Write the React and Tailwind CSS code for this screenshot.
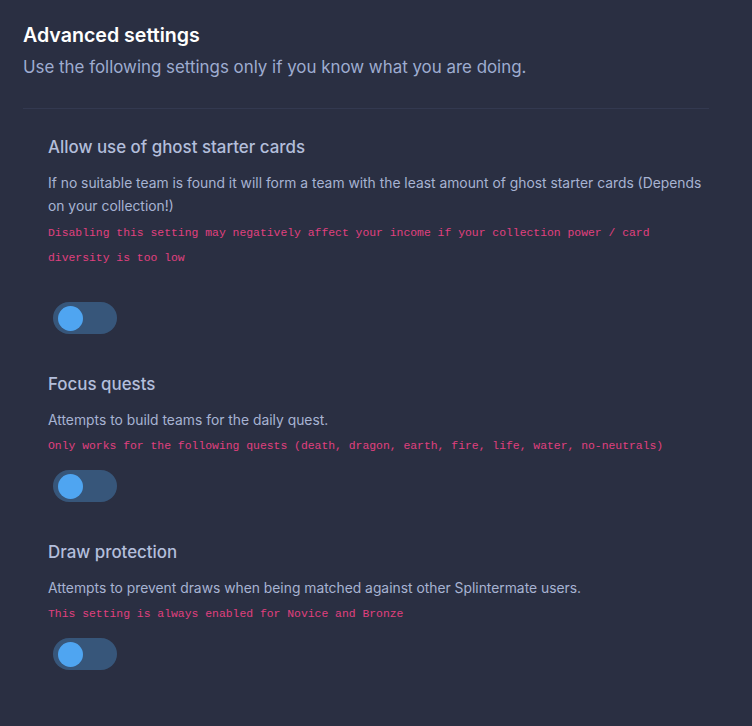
import { useState } from 'react';

const settings = [
  {
    id: 'ghost',
    title: 'Allow use of ghost starter cards',
    description:
      'If no suitable team is found it will form a team with the least amount of ghost starter cards (Depends on your collection!)',
    warning:
      'Disabling this setting may negatively affect your income if your collection power / card diversity is too low',
    first: true,
  },
  {
    id: 'quests',
    title: 'Focus quests',
    description: 'Attempts to build teams for the daily quest.',
    warning: 'Only works for the following quests (death, dragon, earth, fire, life, water, no-neutrals)',
  },
  {
    id: 'draw',
    title: 'Draw protection',
    description: 'Attempts to prevent draws when being matched against other Splintermate users.',
    warning: 'This setting is always enabled for Novice and Bronze',
  },
];

function Toggle({ checked, onChange }) {
  return (
    <button
      onClick={() => onChange(!checked)}
      className="w-16 h-8 rounded-full bg-[#37567a] flex items-center px-[5px]"
    >
      <span
        className={
          'w-[25px] h-[25px] rounded-full bg-[#4fa5f1] transition-transform ' +
          (checked ? 'translate-x-[29px]' : 'translate-x-0')
        }
      />
    </button>
  );
}

function SettingRow({ setting, checked, onChange }) {
  return (
    <div className="pb-[38px] max-w-[662px]">
      <h3 className="text-[16.9px] leading-6 font-medium text-[#b3bedb]">{setting.title}</h3>
      <p className="mt-[13px] text-[13.85px] leading-[23px] text-[#a7b3d2]">{setting.description}</p>
      <p
        className={
          (setting.first ? 'mt-[3px]' : 'mt-[2px]') +
          " text-[11.4px] leading-[25px] text-[#e0407f] font-['Liberation_Mono',monospace]"
        }
      >
        {setting.warning}
      </p>
      <div className={(setting.first ? 'mt-[31px]' : 'mt-[11px]') + ' ml-[5px]'}>
        <Toggle checked={checked} onChange={onChange} />
      </div>
    </div>
  );
}

function App() {
  const [values, setValues] = useState({ ghost: false, quests: false, draw: false });

  return (
    <div className="min-h-screen bg-[#2a2f42] font-['Inter',sans-serif] px-[23px] pt-[23px]">
      <header className="pr-[20px]">
        <h1 className="text-[19.6px] leading-6 font-semibold text-white">Advanced settings</h1>
        <p className="mt-[8px] text-[16.9px] leading-6 text-[#9eacd0]">
          Use the following settings only if you know what you are doing.
        </p>
        <div className="mt-[29px] h-px bg-[#333950]" />
      </header>

      <div className="pl-[25px] pt-[26px]">
        {settings.map(s => (
          <SettingRow
            key={s.id}
            setting={s}
            checked={values[s.id]}
            onChange={v => setValues(prev => ({ ...prev, [s.id]: v }))}
          />
        ))}
      </div>
    </div>
  );
}

export default App;
